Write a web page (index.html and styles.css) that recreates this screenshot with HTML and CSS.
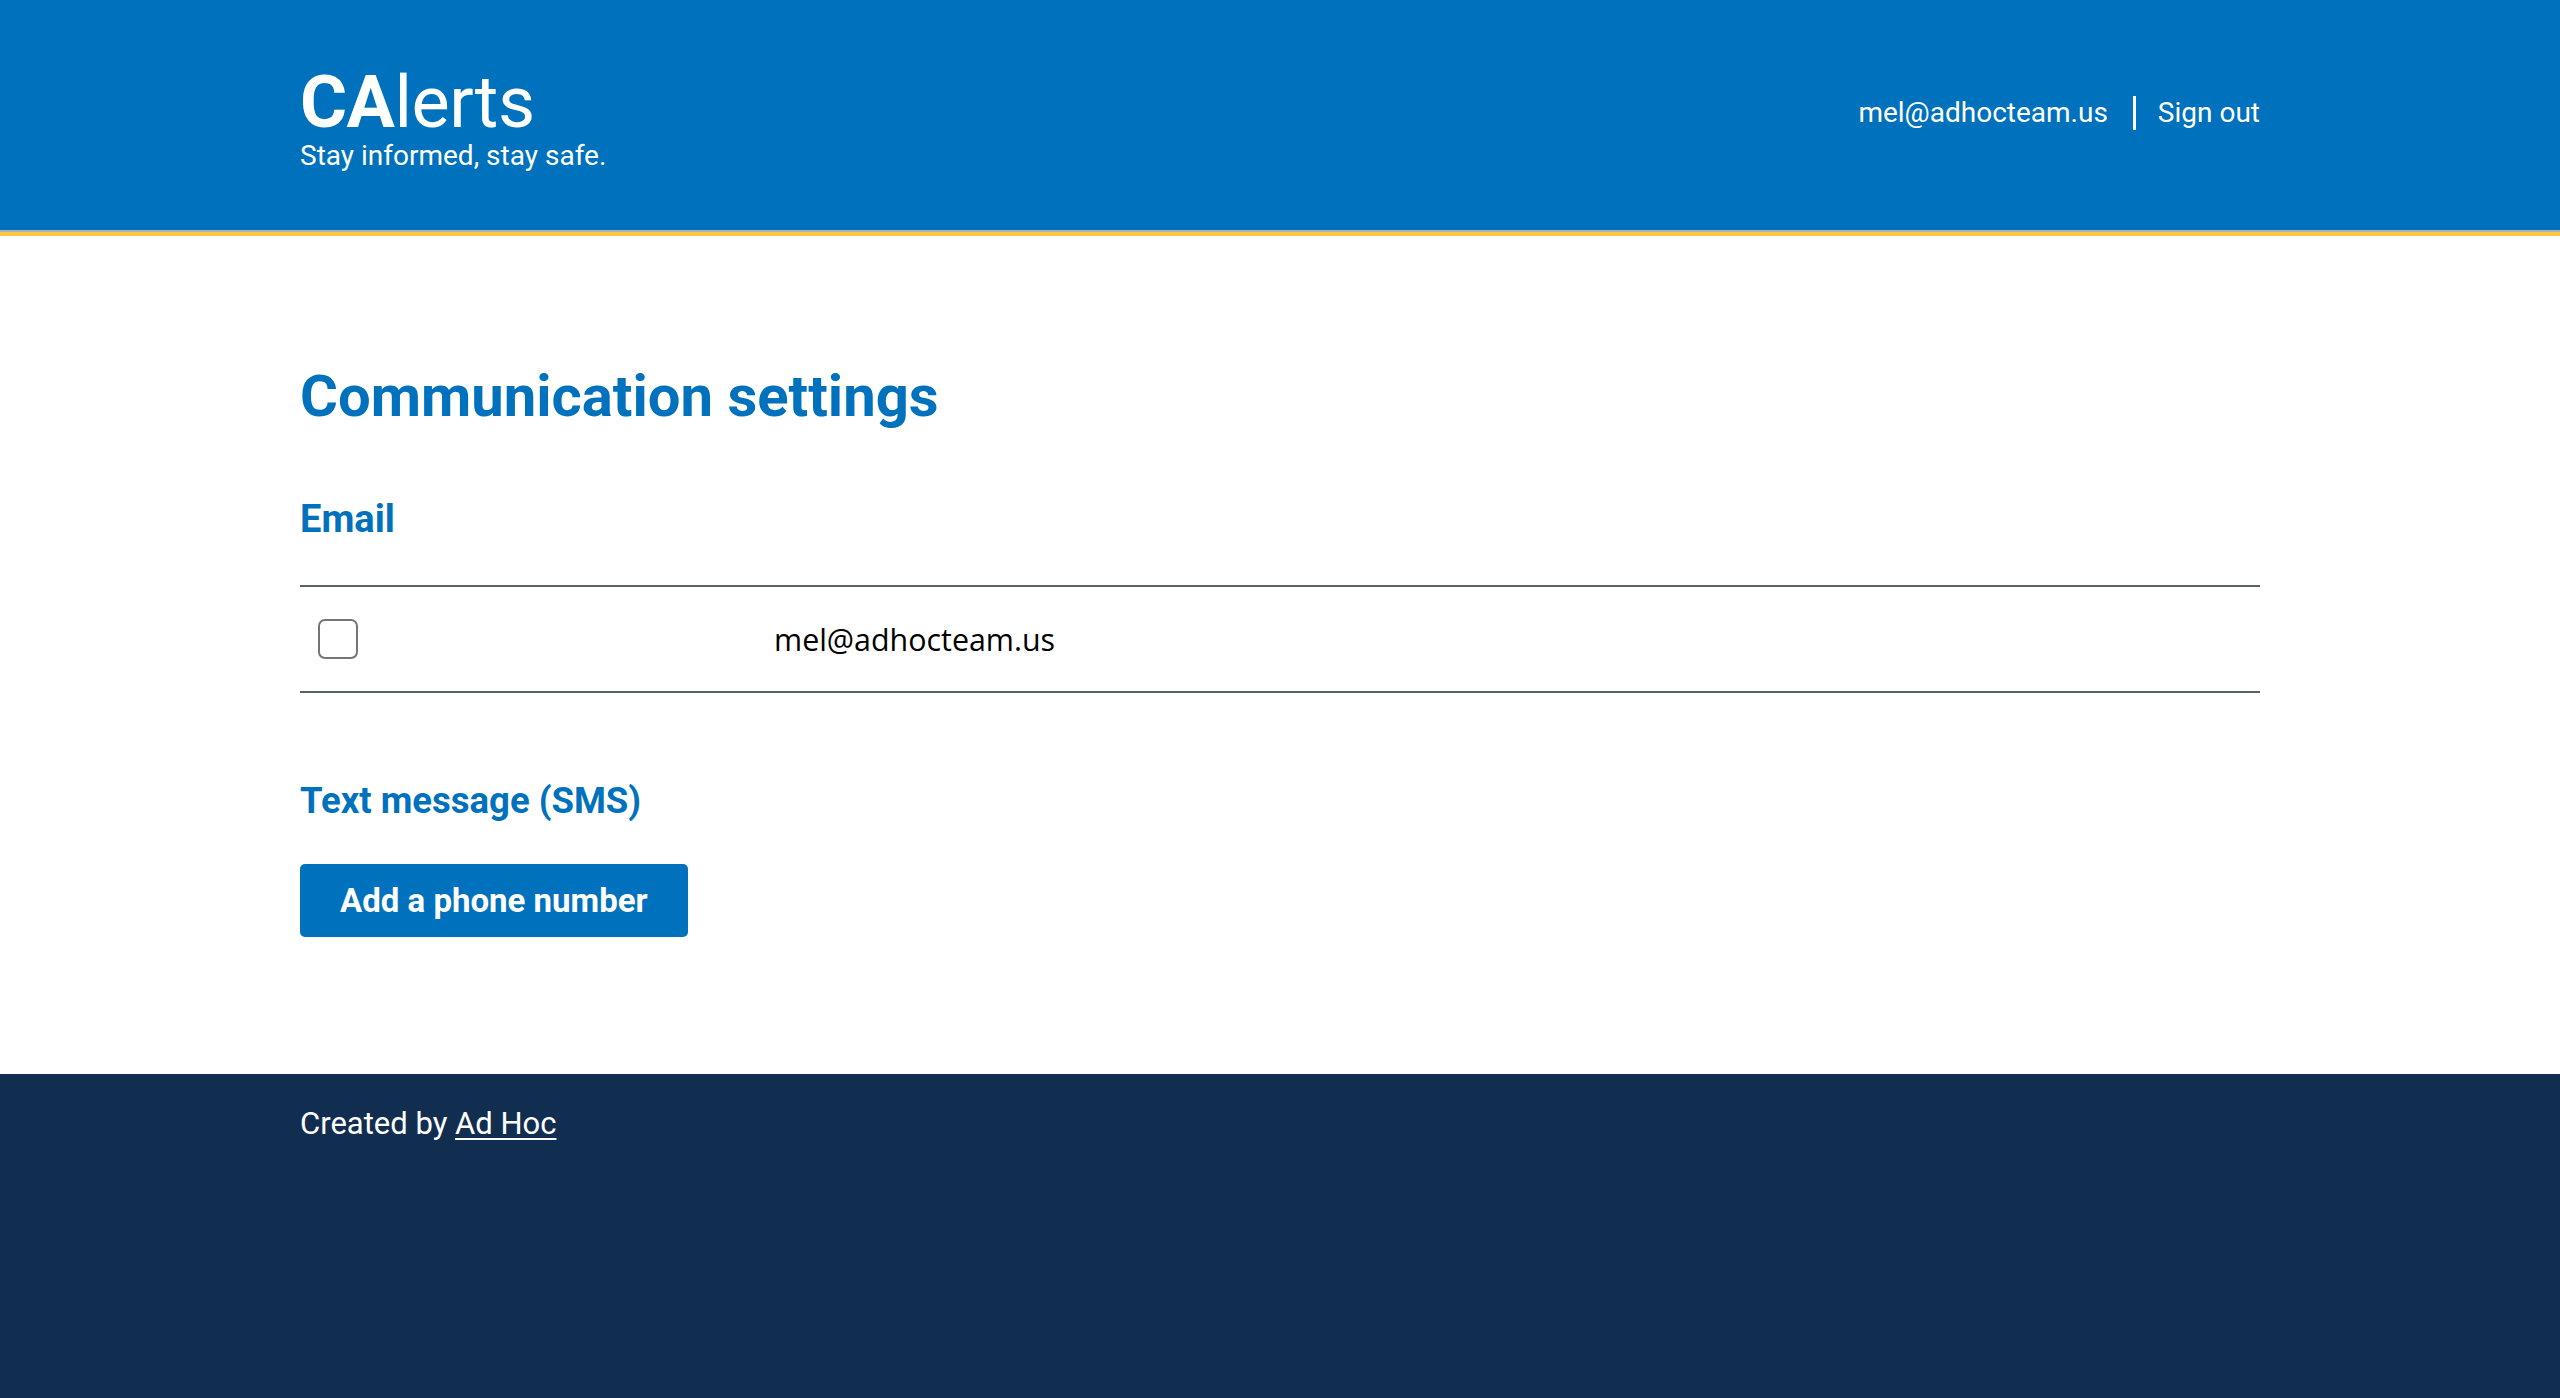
FILE: index.html
```html
<!DOCTYPE html>
<html lang="en">
<head>
<meta charset="utf-8">
<title>CAlerts - Communication settings</title>
<link rel="stylesheet" href="styles.css">
</head>
<body>
<header class="site-header">
  <div class="container header-inner">
    <div class="brand">
      <div class="logo"><strong>CA</strong>lerts</div>
      <div class="tagline">Stay informed, stay safe.</div>
    </div>
    <nav class="user-nav">
      <span class="user-email">mel@adhocteam.us</span>
      <span class="nav-sep"></span>
      <a class="nav-link" href="#">Sign out</a>
    </nav>
  </div>
</header>
<main class="container main">
  <h1 class="page-title">Communication settings</h1>
  <h2 class="section-title">Email</h2>
  <div class="settings-table">
    <div class="settings-row">
      <div class="cell cell-check"><input type="checkbox" class="checkbox" aria-label="Receive email alerts"></div>
      <div class="cell cell-value">mel@adhocteam.us</div>
    </div>
  </div>
  <h2 class="section-title sms-title">Text message (SMS)</h2>
  <button class="btn-primary" type="button">Add a phone number</button>
</main>
<footer class="site-footer">
  <div class="container footer-inner">Created by <a href="#" class="footer-link">Ad Hoc</a></div>
</footer>
</body>
</html>
```
FILE: styles.css
```css
html, body {
  margin: 0;
  padding: 0;
}
body {
  font-family: Roboto, "Noto Sans", sans-serif;
  min-height: 100vh;
  display: flex;
  flex-direction: column;
  background: #ffffff;
  color: #212121;
}
.container {
  width: 1960px;
  margin: 0 auto;
}

/* Header */
.site-header {
  background: #0071bc;
  height: 230px;
  box-shadow: 0 2px 0 #aeb0b5, 0 6px 0 #fbc843;
  margin-bottom: 6px;
  box-sizing: border-box;
  padding-top: 67px;
  color: #ffffff;
}
.header-inner {
  display: flex;
  justify-content: space-between;
  align-items: flex-start;
}
.logo {
  font-size: 72px;
  line-height: 72px;
  font-weight: 400;
  letter-spacing: -0.5px;
}
.logo strong {
  font-weight: 700;
}
.tagline {
  font-size: 28px;
  line-height: 32px;
  margin-top: 1px;
}
.user-nav {
  display: flex;
  align-items: center;
  margin-top: 29px;
  font-size: 28px;
  line-height: 34px;
}
.user-email {
  color: #ffffff;
}
.nav-sep {
  width: 3px;
  height: 34px;
  background: #ffffff;
  margin: 0 22px 0 25px;
}
.nav-link {
  color: #ffffff;
  text-decoration: none;
}

/* Main */
.main {
  padding-top: 125px;
  padding-bottom: 137px;
}
.page-title {
  margin: 0;
  font-size: 58px;
  line-height: 70px;
  font-weight: 700;
  color: #0071bc;
}
.section-title {
  margin: 65px 0 0;
  font-size: 38px;
  line-height: 46px;
  font-weight: 700;
  color: #0071bc;
}
.settings-table {
  margin-top: 43px;
  border-top: 2px solid #5b616b;
  border-bottom: 2px solid #5b616b;
}
.settings-row {
  display: grid;
  grid-template-columns: 474px 1fr;
  align-items: center;
  height: 104px;
}
.cell-check {
  padding-left: 18px;
  display: flex;
  align-items: center;
}
.checkbox {
  appearance: none;
  -webkit-appearance: none;
  width: 40px;
  height: 40px;
  margin: 0;
  border: 2px solid #757575;
  border-radius: 7px;
  background: #ffffff;
  box-sizing: border-box;
}
.cell-value {
  font-family: "Open Sans", "Noto Sans", sans-serif;
  font-size: 30.4px;
  color: #000000;
}
.sms-title {
  margin-top: 86px;
  font-size: 36.5px;
  line-height: 44px;
}
.btn-primary {
  display: block;
  margin-top: 41px;
  height: 73px;
  padding: 0 40px;
  border: 0;
  border-radius: 5px;
  background: #0071bc;
  color: #ffffff;
  font-family: Roboto, "Noto Sans", sans-serif;
  font-size: 33px;
  font-weight: 700;
  line-height: 73px;
  cursor: pointer;
}

/* Footer */
.site-footer {
  flex: 1;
  background: #112e51;
  color: #ffffff;
  padding-top: 31px;
  font-size: 31px;
  line-height: 38px;
}
.footer-link {
  color: #ffffff;
  text-decoration: underline;
  text-underline-offset: 4px;
  text-decoration-thickness: 2px;
}
```
